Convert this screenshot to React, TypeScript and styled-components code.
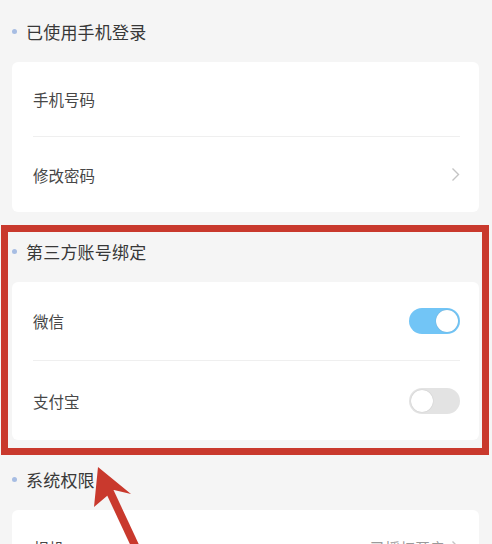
import React from "react";
import styled, { createGlobalStyle } from "styled-components";

const Global = createGlobalStyle`
  html, body { margin: 0; padding: 0; background: #f5f5f5; }
  body { font-family: "Noto Sans CJK SC", "Noto Sans", sans-serif; }
`;

const Page = styled.div`
  position: relative;
  width: 492px;
  height: 544px;
  overflow: hidden;
  box-sizing: border-box;
  padding: 0 13px 0 12px;
  background: #f5f5f5;
`;

const Section = styled.section<{ $first?: boolean }>`
  margin-top: ${(p) => (p.$first ? 0 : 8)}px;
`;

const SectionHeader = styled.div`
  height: 62px;
  display: flex;
  align-items: center;
  gap: 9px;
  font-size: 17px;
  color: #383838;
  letter-spacing: 0.2px;
`;

const Dot = styled.span`
  width: 5px;
  height: 5px;
  border-radius: 50%;
  background: #a7bde3;
  margin-left: 0px;
`;

const Card = styled.div`
  background: #ffffff;
  border-radius: 6px;
  overflow: hidden;
`;

const Row = styled.div<{ $h: number; $last?: boolean }>`
  height: ${(p) => p.$h}px;
  margin: 0 19px 0 21px;
  display: flex;
  align-items: center;
  justify-content: space-between;
  box-sizing: border-box;
  border-bottom: ${(p) => (p.$last ? "none" : "1px solid #efefef")};
  font-size: 15.5px;
  color: #474747;
`;

const Value = styled.span`
  display: flex;
  align-items: center;
  gap: 6px;
  color: #9a9a9a;
  font-size: 15px;
`;

const Toggle = styled.span<{ $on?: boolean }>`
  position: relative;
  width: 51px;
  height: 26px;
  border-radius: 13px;
  background: ${(p) => (p.$on ? "#72c5f6" : "#e3e3e3")};
  box-sizing: border-box;
  &::after {
    content: "";
    position: absolute;
    top: 2px;
    left: ${(p) => (p.$on ? "27px" : "2px")};
    width: 22px;
    height: 22px;
    border-radius: 50%;
    background: #ffffff;
    box-shadow: 0 0 1px rgba(0, 0, 0, 0.25);
  }
`;

const Annotation = styled.div`
  position: absolute;
  left: 1px;
  top: 225px;
  width: 488px;
  height: 230px;
  box-sizing: border-box;
  border: 7px solid #c9392d;
  pointer-events: none;
`;

const ArrowLayer = styled.svg`
  position: absolute;
  left: 0;
  top: 0;
  width: 492px;
  height: 544px;
  pointer-events: none;
`;

const Chevron = () => (
  <svg width="9" height="15" viewBox="0 0 9 15">
    <path d="M1.5 1.5 L7.5 7.5 L1.5 13.5" fill="none" stroke="#c4c4c4" strokeWidth="1.4" />
  </svg>
);

export default function App() {
  return (
    <>
      <Global />
      <Page>
        <Section $first>
          <SectionHeader>
            <Dot />
            已使用手机登录
          </SectionHeader>
          <Card>
            <Row $h={75}>手机号码</Row>
            <Row $h={75} $last>
              修改密码
              <Chevron />
            </Row>
          </Card>
        </Section>
        <Section>
          <SectionHeader>
            <Dot />
            第三方账号绑定
          </SectionHeader>
          <Card>
            <Row $h={79}>
              微信
              <Toggle $on />
            </Row>
            <Row $h={79} $last>
              支付宝
              <Toggle />
            </Row>
          </Card>
        </Section>
        <Section>
          <SectionHeader>
            <Dot />
            系统权限
          </SectionHeader>
          <Card>
            <Row $h={75} $last>
              相机
              <Value>
                已授权开启
                <Chevron />
              </Value>
            </Row>
          </Card>
        </Section>
        <Annotation />
        <ArrowLayer viewBox="0 0 492 544">
          <line x1="110" y1="492" x2="138" y2="552" stroke="#c9392d" strokeWidth="8" />
          <polygon points="98,467 131,494 114,490 94,507" fill="#c9392d" />
        </ArrowLayer>
      </Page>
    </>
  );
}
